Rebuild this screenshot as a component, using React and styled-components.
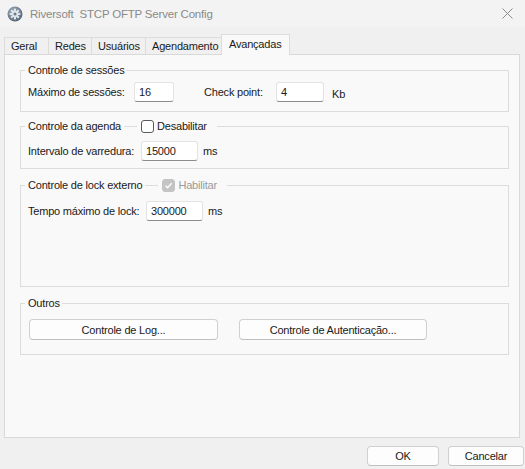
import React from 'react'
import styled, { createGlobalStyle } from 'styled-components'

const GlobalStyle = createGlobalStyle`
  * {
    box-sizing: border-box;
  }

  body {
    margin: 0;
    background: #f0f0f0;
    font-family: 'Liberation Sans', Arial, sans-serif;
    font-size: 11px;
    letter-spacing: -0.2px;
    color: #1a1a1a;
  }
`

const Window = styled.div`
  width: 525px;
  height: 469px;
  display: flex;
  flex-direction: column;
  background: #f0f0f0;
  overflow: hidden;
`

const TitleBar = styled.div`
  height: 27px;
  display: flex;
  align-items: center;
  padding-left: 7px;
  background: #f3f3f3;
`

const Title = styled.span`
  margin-left: 7px;
  font-size: 11.5px;
  color: #8a8a8a;
  white-space: pre;
  letter-spacing: -0.2px;
`

const CloseButton = styled.div`
  margin-left: auto;
  width: 46px;
  height: 27px;
  display: flex;
  align-items: center;
  justify-content: center;
  margin-right: -5px;
`

const TabStrip = styled.div`
  height: 27px;
  display: flex;
  align-items: flex-end;
  padding-left: 4px;
`

const Tab = styled.div`
  width: ${(p) => p.$w}px;
  height: ${(p) => (p.$active ? 21 : 17)}px;
  margin-right: -1px;
  margin-bottom: ${(p) => (p.$active ? -1 : 0)}px;
  padding-left: ${(p) => (p.$active ? 7 : 6)}px;
  padding-bottom: ${(p) => (p.$active ? 2 : 0)}px;
  display: flex;
  align-items: center;
  border: 1px solid #dcdcdc;
  border-bottom: none;
  background: ${(p) => (p.$active ? '#f9f9f9' : '#f0f0f0')};
  white-space: nowrap;
  overflow: hidden;
  position: relative;
  z-index: ${(p) => (p.$active ? 1 : 0)};
`

const Panel = styled.div`
  width: 516px;
  height: 384px;
  margin-left: 4px;
  border: 1px solid #d9d9d9;
  background: #f9f9f9;
  padding: 8px 10px 0 15px;
  display: flex;
  flex-direction: column;
`

const Group = styled.fieldset`
  margin: ${(p) => p.$gap}px 0 0 0;
  padding: 0 7px;
  height: ${(p) => p.$h}px;
  border: 1px solid #dcdcdc;
  min-width: 0;
`

const Legend = styled.legend`
  margin-left: -3px;
  padding: 0 ${(p) => (p.$extra ? 10 : 2)}px 0 3px;
  line-height: 14px;
  height: 14px;
  display: flex;
  align-items: center;
`

const LegendLine = styled.span`
  width: 13px;
  height: 1px;
  margin: 0 4px 0 3px;
  background: #dcdcdc;
`

const Check = styled.span`
  width: 13px;
  height: 13px;
  border-radius: 3px;
  border: 1px solid ${(p) => (p.$disabled ? '#c4c4c4' : '#5a5a5a')};
  background: ${(p) => (p.$disabled ? '#c4c4c4' : '#ffffff')};
  display: flex;
  align-items: center;
  justify-content: center;
`

const CheckText = styled.span`
  margin-left: 3px;
  color: ${(p) => (p.$disabled ? '#9a9a9a' : '#1a1a1a')};
`

const Row = styled.div`
  display: flex;
  align-items: center;
  margin-top: ${(p) => p.$top}px;
`

const Label = styled.span`
  width: ${(p) => p.$w}px;
  margin-left: ${(p) => p.$ml || 0}px;
  flex-shrink: 0;
`

const Field = styled.div`
  width: ${(p) => p.$w}px;
  height: 20px;
  padding-left: 4px;
  display: flex;
  align-items: center;
  background: #ffffff;
  border: 1px solid #e3e3e3;
  border-bottom-color: #8c8c8c;
  border-radius: 3px;
`

const Unit = styled.span`
  margin-left: ${(p) => p.$ml}px;
  margin-top: ${(p) => p.$mt || 0}px;
`

const Button = styled.button`
  width: ${(p) => p.$w}px;
  height: ${(p) => p.$h || 21}px;
  margin-left: ${(p) => p.$ml || 0}px;
  padding: 0;
  background: #fdfdfd;
  border: 1px solid #d0d0d0;
  border-bottom-color: #c0c0c0;
  border-radius: 4px;
  font-family: inherit;
  font-size: 11px;
  letter-spacing: -0.2px;
  color: #1a1a1a;
`

const Footer = styled.div`
  display: flex;
  justify-content: flex-end;
  padding-top: 8px;
  padding-right: 1px;
`

const AppIcon = () => (
  <svg width="16" height="16" viewBox="0 0 16 16">
    <defs>
      <radialGradient id="g" cx="40%" cy="35%" r="70%">
        <stop offset="0" stopColor="#a9b7c4" />
        <stop offset="1" stopColor="#4f6072" />
      </radialGradient>
    </defs>
    <circle cx="8" cy="8" r="7.5" fill="url(#g)" />
    <g fill="#dfe5ea">
      <circle cx="8" cy="8" r="3.2" />
      <rect x="7" y="2.6" width="2" height="10.8" />
      <rect x="2.6" y="7" width="10.8" height="2" />
      <rect x="7" y="2.6" width="2" height="10.8" transform="rotate(45 8 8)" />
      <rect x="7" y="2.6" width="2" height="10.8" transform="rotate(-45 8 8)" />
    </g>
    <circle cx="8" cy="8" r="1.5" fill="#6b7b8b" />
  </svg>
)

const CloseIcon = () => (
  <svg width="11" height="11" viewBox="0 0 11 11">
    <path d="M0.5 0.5 L10.5 10.5 M10.5 0.5 L0.5 10.5" stroke="#8a8a8a" strokeWidth="1" />
  </svg>
)

const Tick = () => (
  <svg width="9" height="9" viewBox="0 0 9 9">
    <path d="M1.5 4.8 L3.6 6.8 L7.6 2.2" stroke="#ffffff" strokeWidth="1.3" fill="none" />
  </svg>
)

const tabs = [
  { name: 'Geral', w: 45 },
  { name: 'Redes', w: 44 },
  { name: 'Usuários', w: 55 },
  { name: 'Agendamento', w: 77 },
  { name: 'Avançadas', w: 69, active: true },
]

export default function App() {
  return (
    <Window>
      <GlobalStyle />
      <TitleBar>
        <AppIcon />
        <Title>Riversoft  STCP OFTP Server Config</Title>
        <CloseButton>
          <CloseIcon />
        </CloseButton>
      </TitleBar>

      <TabStrip>
        {tabs.map((t) => (
          <Tab key={t.name} $w={t.w} $active={t.active}>
            {t.name}
          </Tab>
        ))}
      </TabStrip>

      <Panel>
        <Group $gap={0} $h={49}>
          <Legend>Controle de sessões</Legend>
          <Row $top={5}>
            <Label $w={106}>Máximo de sessões:</Label>
            <Field $w={40}>16</Field>
            <Label $w={72} $ml={30}>
              Check point:
            </Label>
            <Field $w={48}>4</Field>
            <Unit $ml={8} $mt={3}>
              Kb
            </Unit>
          </Row>
        </Group>

        <Group $gap={7} $h={50}>
          <Legend $extra>
            Controle da agenda
            <LegendLine />
            <Check />
            <CheckText>Desabilitar</CheckText>
          </Legend>
          <Row $top={8}>
            <Label $w={113}>Intervalo de varredura:</Label>
            <Field $w={57}>15000</Field>
            <Unit $ml={5}>ms</Unit>
          </Row>
        </Group>

        <Group $gap={9} $h={109}>
          <Legend $extra>
            Controle de lock externo
            <LegendLine />
            <Check $disabled>
              <Tick />
            </Check>
            <CheckText $disabled>Habilitar</CheckText>
          </Legend>
          <Row $top={9}>
            <Label $w={118}>Tempo máximo de lock:</Label>
            <Field $w={57}>300000</Field>
            <Unit $ml={5}>ms</Unit>
          </Row>
        </Group>

        <Group $gap={9} $h={59}>
          <Legend>Outros</Legend>
          <Row $top={9}>
            <Button $w={189} $ml={1}>
              Controle de Log...
            </Button>
            <Button $w={188} $ml={21}>
              Controle de Autenticação...
            </Button>
          </Row>
        </Group>
      </Panel>

      <Footer>
        <Button $w={72} $h={20}>
          OK
        </Button>
        <Button $w={76} $h={20} $ml={9}>
          Cancelar
        </Button>
      </Footer>
    </Window>
  )
}
